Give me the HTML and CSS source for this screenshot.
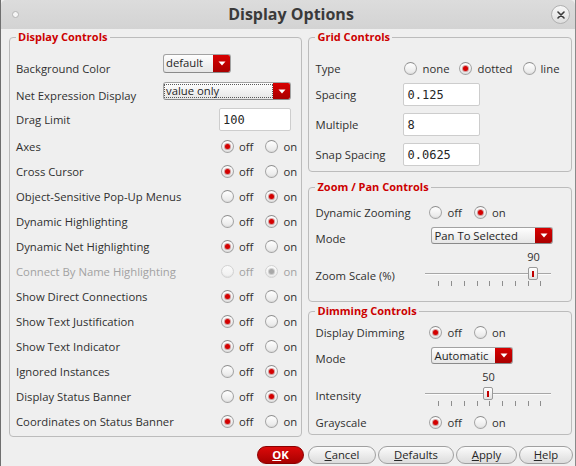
FILE: index.html
```html
<!DOCTYPE html>
<html lang="en">
<head>
<meta charset="utf-8">
<title>Display Options</title>
<link rel="stylesheet" href="styles.css">
</head>
<body>
<div class="window">
  <header class="titlebar">
    <span class="wdot"></span>
    <h1 class="title">Display Options</h1>
    <button class="close" aria-label="Close">
      <svg width="8" height="8" viewBox="0 0 8 8"><path d="M1 1L7 7M7 1L1 7" stroke="#3a3a3a" stroke-width="1.6" stroke-linecap="round"/></svg>
    </button>
  </header>

  <main class="content">
    <fieldset class="group g-display">
      <legend>Display Controls</legend>
      <div class="row r-first">
        <span class="lbl w-combo">Background Color</span>
        <div class="combo c-bg"><span class="cval">default</span><span class="carrow"><svg width="8" height="5" viewBox="0 0 8 5"><path d="M0.5 0.5H7.5L4 4.5Z" fill="#fff"/></svg></span></div>
      </div>
      <div class="row r-net">
        <span class="lbl w-combo">Net Expression Display</span>
        <div class="combo c-net"><span class="cval focus">value only</span><span class="carrow"><svg width="8" height="5" viewBox="0 0 8 5"><path d="M0.5 0.5H7.5L4 4.5Z" fill="#fff"/></svg></span></div>
      </div>
      <div class="row">
        <span class="lbl w-input">Drag Limit</span>
        <input class="field f-drag" type="text" value="100">
      </div>
      <div class="row r-gap">
        <span class="lbl w-radio">Axes</span>
        <div class="opts"><label class="opt"><input type="radio" name="axes" checked><span>off</span></label><label class="opt"><input type="radio" name="axes"><span>on</span></label></div>
      </div>
      <div class="row">
        <span class="lbl w-radio">Cross Cursor</span>
        <div class="opts"><label class="opt"><input type="radio" name="cc" checked><span>off</span></label><label class="opt"><input type="radio" name="cc"><span>on</span></label></div>
      </div>
      <div class="row">
        <span class="lbl w-radio">Object-Sensitive Pop-Up Menus</span>
        <div class="opts"><label class="opt"><input type="radio" name="osp"><span>off</span></label><label class="opt"><input type="radio" name="osp" checked><span>on</span></label></div>
      </div>
      <div class="row">
        <span class="lbl w-radio">Dynamic Highlighting</span>
        <div class="opts"><label class="opt"><input type="radio" name="dh"><span>off</span></label><label class="opt"><input type="radio" name="dh" checked><span>on</span></label></div>
      </div>
      <div class="row">
        <span class="lbl w-radio">Dynamic Net Highlighting</span>
        <div class="opts"><label class="opt"><input type="radio" name="dnh" checked><span>off</span></label><label class="opt"><input type="radio" name="dnh"><span>on</span></label></div>
      </div>
      <div class="row disabled">
        <span class="lbl w-radio">Connect By Name Highlighting</span>
        <div class="opts"><label class="opt"><input type="radio" name="cbn" disabled><span>off</span></label><label class="opt"><input type="radio" name="cbn" checked disabled><span>on</span></label></div>
      </div>
      <div class="row">
        <span class="lbl w-radio">Show Direct Connections</span>
        <div class="opts"><label class="opt"><input type="radio" name="sdc" checked><span>off</span></label><label class="opt"><input type="radio" name="sdc"><span>on</span></label></div>
      </div>
      <div class="row">
        <span class="lbl w-radio">Show Text Justification</span>
        <div class="opts"><label class="opt"><input type="radio" name="stj" checked><span>off</span></label><label class="opt"><input type="radio" name="stj"><span>on</span></label></div>
      </div>
      <div class="row">
        <span class="lbl w-radio">Show Text Indicator</span>
        <div class="opts"><label class="opt"><input type="radio" name="sti" checked><span>off</span></label><label class="opt"><input type="radio" name="sti"><span>on</span></label></div>
      </div>
      <div class="row">
        <span class="lbl w-radio">Ignored Instances</span>
        <div class="opts"><label class="opt"><input type="radio" name="ii"><span>off</span></label><label class="opt"><input type="radio" name="ii" checked><span>on</span></label></div>
      </div>
      <div class="row">
        <span class="lbl w-radio">Display Status Banner</span>
        <div class="opts"><label class="opt"><input type="radio" name="dsb"><span>off</span></label><label class="opt"><input type="radio" name="dsb" checked><span>on</span></label></div>
      </div>
      <div class="row">
        <span class="lbl w-radio">Coordinates on Status Banner</span>
        <div class="opts"><label class="opt"><input type="radio" name="csb" checked><span>off</span></label><label class="opt"><input type="radio" name="csb"><span>on</span></label></div>
      </div>
    </fieldset>

    <div class="rightcol">
      <fieldset class="group g-grid">
        <legend>Grid Controls</legend>
        <div class="row r-type">
          <span class="lbl w-grid">Type</span>
          <div class="opts opts-grid"><label class="opt"><input type="radio" name="gt"><span>none</span></label><label class="opt"><input type="radio" name="gt" checked><span>dotted</span></label><label class="opt"><input type="radio" name="gt"><span>line</span></label></div>
        </div>
        <div class="row r-in r-in1">
          <span class="lbl w-gridin">Spacing</span>
          <input class="field f-grid" type="text" value="0.125">
        </div>
        <div class="row r-in">
          <span class="lbl w-gridin">Multiple</span>
          <input class="field f-grid" type="text" value="8">
        </div>
        <div class="row r-in">
          <span class="lbl w-gridin">Snap Spacing</span>
          <input class="field f-grid" type="text" value="0.0625">
        </div>
      </fieldset>

      <fieldset class="group g-zoom">
        <legend>Zoom / Pan Controls</legend>
        <div class="row r-rad r-zfirst">
          <span class="lbl w-right">Dynamic Zooming</span>
          <div class="opts"><label class="opt"><input type="radio" name="dz"><span>off</span></label><label class="opt"><input type="radio" name="dz" checked><span>on</span></label></div>
        </div>
        <div class="row r-mode">
          <span class="lbl w-rcombo">Mode</span>
          <div class="combo c-pan"><span class="cval">Pan To Selected</span><span class="carrow"><svg width="8" height="5" viewBox="0 0 8 5"><path d="M0.5 0.5H7.5L4 4.5Z" fill="#fff"/></svg></span></div>
        </div>
        <div class="row r-slider">
          <span class="lbl w-slider">Zoom Scale (%)</span>
          <div class="slider">
            <span class="sval" style="left:97px">90</span>
            <div class="groove"><span class="track"></span><span class="handle" style="left:103px"></span></div>
            <div class="ticks"><i></i><i></i><i></i><i></i><i></i><i></i><i></i><i></i><i></i></div>
          </div>
        </div>
      </fieldset>

      <fieldset class="group g-dim">
        <legend>Dimming Controls</legend>
        <div class="row r-rad r-dfirst">
          <span class="lbl w-right">Display Dimming</span>
          <div class="opts"><label class="opt"><input type="radio" name="dd" checked><span>off</span></label><label class="opt"><input type="radio" name="dd"><span>on</span></label></div>
        </div>
        <div class="row r-mode">
          <span class="lbl w-rcombo">Mode</span>
          <div class="combo c-auto"><span class="cval">Automatic</span><span class="carrow"><svg width="8" height="5" viewBox="0 0 8 5"><path d="M0.5 0.5H7.5L4 4.5Z" fill="#fff"/></svg></span></div>
        </div>
        <div class="row r-slider">
          <span class="lbl w-slider">Intensity</span>
          <div class="slider">
            <span class="sval" style="left:52px">50</span>
            <div class="groove"><span class="track"></span><span class="handle" style="left:58px"></span></div>
            <div class="ticks"><i></i><i></i><i></i><i></i><i></i><i></i><i></i><i></i><i></i></div>
          </div>
        </div>
        <div class="row r-rad r-gray">
          <span class="lbl w-right">Grayscale</span>
          <div class="opts"><label class="opt"><input type="radio" name="gs" checked><span>off</span></label><label class="opt"><input type="radio" name="gs"><span>on</span></label></div>
        </div>
      </fieldset>
    </div>
  </main>

  <footer class="buttons">
    <button class="btn btn-ok"><u>O</u>K</button>
    <button class="btn b-cancel"><u>C</u>ancel</button>
    <button class="btn b-defaults"><u>D</u>efaults</button>
    <button class="btn b-apply"><u>A</u>pply</button>
    <button class="btn b-help"><u>H</u>elp</button>
  </footer>
</div>
</body>
</html>
```

FILE: styles.css
```css
* { box-sizing: border-box; }

html, body {
  margin: 0;
  padding: 0;
  background: #efefef;
}

body {
  font-family: "Open Sans", "Noto Sans", sans-serif;
  font-size: 11.3px;
  color: #2f2f2f;
}

.window {
  width: 576px;
  height: 466px;
  background: #efefef;
  border-left: 1px solid #6f6f6f;
  border-right: 1px solid #8a8a8a;
  overflow: hidden;
}

/* ---------- title bar ---------- */
.titlebar {
  height: 29px;
  display: grid;
  grid-template-columns: 1fr auto 1fr;
  align-items: center;
  background: linear-gradient(#dcdcdc, #d3d3d3);
  border-radius: 5px 5px 0 0;
}

.wdot {
  justify-self: start;
  margin-left: 11px;
  width: 7px;
  height: 7px;
  border-radius: 50%;
  background: #f6f6f6;
  border: 1px solid #b4b4b4;
}

.title {
  margin: 0;
  font-size: 16px;
  font-weight: bold;
  color: #3a3a3a;
  line-height: 29px;
  padding-left: 6px;
}

.close {
  justify-self: end;
  margin-right: 5px;
  width: 19px;
  height: 19px;
  padding: 0;
  border-radius: 50%;
  border: 1px solid #b0b0b0;
  background: linear-gradient(#f7f7f7, #dedede);
  display: flex;
  align-items: center;
  justify-content: center;
}

/* ---------- content ---------- */
.content {
  display: flex;
  gap: 6px;
  padding: 1px 3px 0 8px;
}

.group {
  margin: 0;
  padding: 0 6px;
  border: 1px solid #bcbcbc;
  border-radius: 4px;
  min-width: 0;
}

.group legend {
  color: #cc0000;
  font-weight: bold;
  font-size: 11px;
  line-height: 14px;
  padding: 0 2px;
  margin-left: 0;
}

.g-display {
  width: 294px;
  padding-top: 12px;
  padding-bottom: 2px;
}

.rightcol {
  width: 264px;
  display: flex;
  flex-direction: column;
}

.g-grid { padding-top: 12px; padding-bottom: 5px; }
.g-zoom { margin-top: 8px; padding-top: 6px; padding-bottom: 13px; }
.g-dim  { margin-top: 2px; padding-top: 2px; padding-bottom: 0px; }

.row {
  display: flex;
  align-items: center;
  height: 25px;
}

.lbl {
  flex: none;
  white-space: nowrap;
  line-height: 15px;
}

.w-combo { width: 147px; }
.w-input { width: 203px; }
.w-radio { width: 205px; }
.w-grid  { width: 89px; }
.w-gridin { width: 88px; }
.w-right { width: 114px; }
.w-rcombo { width: 116px; }
.w-slider { width: 110px; align-self: flex-start; margin-top: 18px; }

.r-first, .r-net { align-items: flex-start; }
.r-first .lbl { margin-top: 5px; }
.r-net .lbl { margin-top: 6px; }
.r-net { margin-top: 1px; }
.r-gap { margin-top: 2px; }

.r-first .combo { margin-top: -2px; height: 19px; }
.r-net .combo { height: 18px; }

.disabled .lbl,
.disabled .opt span { color: #a2a2a2; }

/* ---------- radios ---------- */
.opts {
  display: flex;
  gap: 12px;
}

.opts-grid { gap: 10px; }

.opt {
  display: flex;
  align-items: center;
  gap: 5px;
}

.opt input {
  appearance: none;
  -webkit-appearance: none;
  margin: 0;
  width: 13px;
  height: 13px;
  border-radius: 50%;
  border: 1px solid #a3a3a3;
  border-top-color: #8e8e8e;
  background: linear-gradient(#ffffff, #e6e6e6);
  box-shadow: inset 0 -1px 1px rgba(0,0,0,0.06);
  display: grid;
  place-items: center;
}

.opt input:checked::after {
  content: "";
  width: 5px;
  height: 5px;
  border-radius: 50%;
  background: #d40000;
  box-shadow: 0 0 0 1px rgba(150,0,0,0.35);
}

.opt input:disabled {
  border-color: #d2d2d2;
  background: linear-gradient(#fafafa, #efefef);
}

.opt input:disabled:checked::after {
  background: #a8a8a8;
  box-shadow: 0 0 0 1px rgba(120,120,120,0.3);
}

/* ---------- combos ---------- */
.combo {
  display: flex;
  height: 17px;
  border: 1px solid #a2a2a2;
  border-bottom-color: #8a8a8a;
  border-radius: 3px;
  background: linear-gradient(#fefefe, #e6e6e6);
  overflow: hidden;
}

.cval {
  flex: 1;
  padding-left: 2px;
  line-height: 15px;
  white-space: nowrap;
  color: #1f1f1f;
  font-size: 11.3px;
}

.cval.focus {
  margin: 1px 15px 1px 0;
  padding-left: 1px;
  border: 1px dotted #5a5a5a;
  line-height: 12px;
}

.carrow {
  width: 17px;
  flex: none;
  background: linear-gradient(#d80000, #a90000);
  display: flex;
  align-items: center;
  justify-content: center;
}

.c-net .carrow { margin-left: -15px; }

.c-bg { width: 68px; }
.c-net { width: 128px; }
.c-pan { width: 122px; }
.c-auto { width: 82px; }

.r-mode {
  height: 22px;
  margin-top: 3px;
  align-items: flex-start;
}

.r-mode .lbl { line-height: 24px; }

/* ---------- text fields ---------- */
.field {
  font-family: "DejaVu Sans Mono", "Liberation Mono", monospace;
  font-size: 12px;
  color: #262626;
  background: #ffffff;
  border: 1px solid #cdcdcd;
  border-radius: 2px;
  margin: 0;
  padding: 0 0 0 3px;
  outline: none;
}

.f-drag { width: 72px; height: 23px; }
.f-grid { width: 77px; height: 23px; }

.r-in { height: 23px; margin-top: 7px; }
.r-in1 { margin-top: 2px; }

/* ---------- sliders ---------- */
.r-rad { height: 24px; }
.r-zfirst { margin-top: 0; }
.r-gray { margin-top: 2px; }

.r-slider {
  height: 38px;
  margin-top: 1px;
  align-items: flex-start;
}

.slider {
  position: relative;
  width: 126px;
  height: 38px;
}

.sval {
  position: absolute;
  top: 0;
  width: 22px;
  text-align: center;
  line-height: 13px;
  font-size: 11px;
}

.groove {
  position: relative;
  margin-top: 13px;
  height: 18px;
}

.track {
  position: absolute;
  left: 0;
  right: 0;
  top: 10px;
  height: 1px;
  background: #a7a7a7;
  box-shadow: 0 1px 0 #fbfbfb;
}

.handle {
  position: absolute;
  top: 4px;
  width: 10px;
  height: 13px;
  border: 1px solid #9a9a9a;
  border-radius: 2px;
  background: linear-gradient(#ffffff, #e2e2e2);
}

.handle::after {
  content: "";
  position: absolute;
  left: 3px;
  top: 3px;
  width: 2px;
  height: 6px;
  background: #c00000;
}

.ticks {
  display: flex;
  justify-content: space-between;
  padding: 0 10px 0 13px;
  height: 5px;
}

.ticks i {
  display: block;
  width: 1px;
  height: 5px;
  background: #8e8e8e;
}

/* ---------- buttons ---------- */
.buttons {
  display: flex;
  justify-content: flex-end;
  gap: 2px;
  padding: 9px 2px 0 0;
}

.btn {
  height: 18px;
  padding: 0;
  font-family: "Open Sans", "Noto Sans", sans-serif;
  font-size: 11.3px;
  color: #262626;
  border: 1px solid #a0a0a0;
  border-radius: 9px;
  background: linear-gradient(#fbfbfb, #dcdcdc);
  line-height: 16px;
}

.btn-ok {
  width: 47px;
  margin-right: 2px;
  color: #ffffff;
  font-weight: bold;
  border-color: #8a0000;
  background: linear-gradient(#dc0a0a, #a80000);
}

.b-cancel { width: 68px; }
.b-defaults { width: 76px; }
.b-apply { width: 61px; }
.b-help { width: 54px; }
```
